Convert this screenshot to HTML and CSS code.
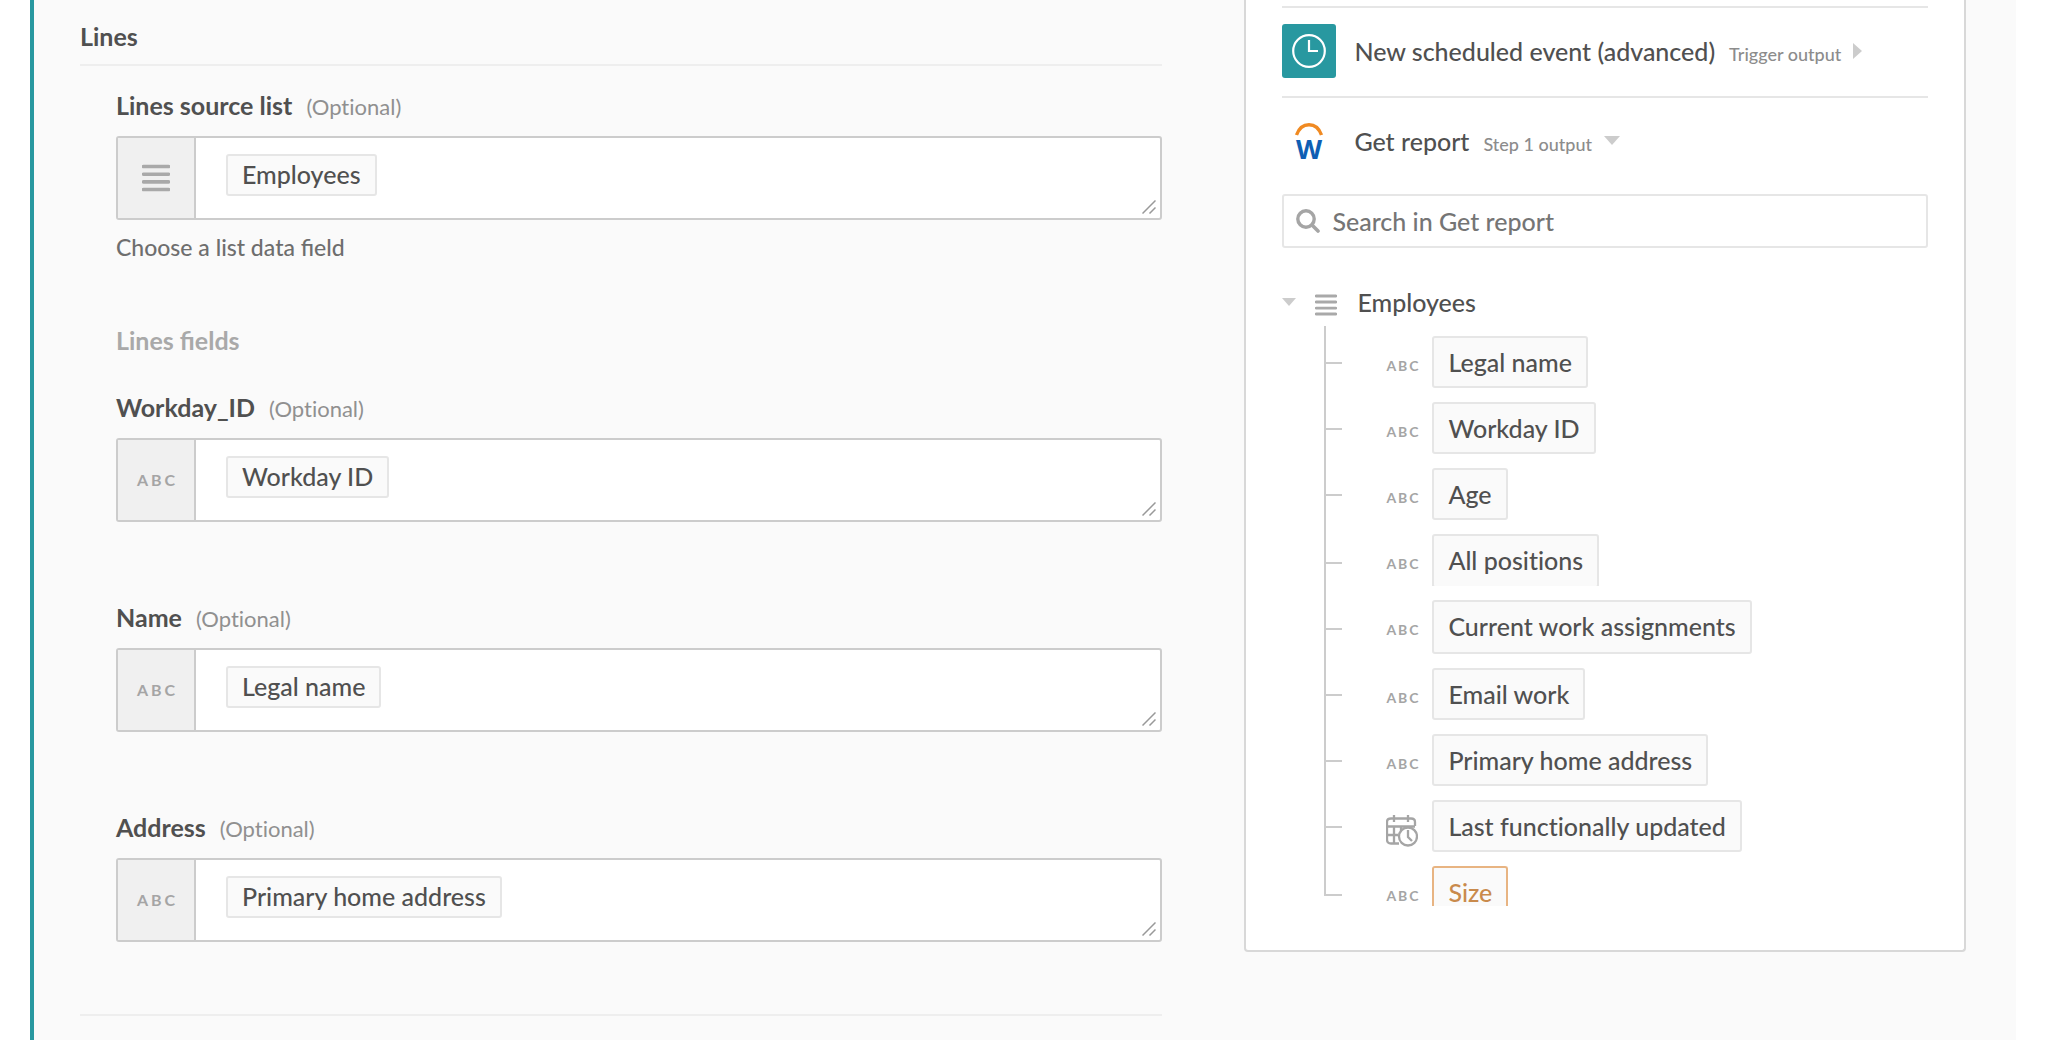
FILE: index.html
```html
<!DOCTYPE html>
<html lang="en">
<head>
<meta charset="utf-8">
<title>Lines mapping</title>
<link rel="stylesheet" href="styles.css">
</head>
<body>
<svg width="0" height="0" class="defs" aria-hidden="true">
  <symbol id="list" viewBox="0 0 28 28">
    <path d="M1.500 2.500h25M1.500 10.200h25M1.500 17.900h25M1.500 25.500h25" stroke="#a9a9a9" stroke-width="3.600" stroke-linecap="round"/>
  </symbol>
  <symbol id="grip" viewBox="0 0 14 14">
    <path d="M.5 13.500l13-13M7.500 13.500l6-6" stroke="#999" stroke-width="1.500" fill="none"/>
  </symbol>
</svg>
<div class="workspace">
  <main class="form">
    <h2 class="section-title">Lines</h2>
    <div class="fields">
      <div class="field">
        <label class="label" for="source">Lines source list <span class="optional">(Optional)</span></label>
        <div class="control">
          <span class="type"><svg class="list-icon"><use href="#list"/></svg></span>
          <div class="value"><span class="tag">Employees</span><textarea id="source"></textarea></div>
          <svg class="grip"><use href="#grip"/></svg>
        </div>
        <p class="hint">Choose a list data field</p>
      </div>
      <h3 class="subheading">Lines fields</h3>
      <div class="field">
        <label class="label" for="workday">Workday_ID <span class="optional">(Optional)</span></label>
        <div class="control">
          <span class="type type-text">ABC</span>
          <div class="value"><span class="tag">Workday ID</span><textarea id="workday"></textarea></div>
          <svg class="grip"><use href="#grip"/></svg>
        </div>
      </div>
      <div class="field">
        <label class="label" for="name">Name <span class="optional">(Optional)</span></label>
        <div class="control">
          <span class="type type-text">ABC</span>
          <div class="value"><span class="tag">Legal name</span><textarea id="name"></textarea></div>
          <svg class="grip"><use href="#grip"/></svg>
        </div>
      </div>
      <div class="field">
        <label class="label" for="address">Address <span class="optional">(Optional)</span></label>
        <div class="control">
          <span class="type type-text">ABC</span>
          <div class="value"><span class="tag">Primary home address</span><textarea id="address"></textarea></div>
          <svg class="grip"><use href="#grip"/></svg>
        </div>
      </div>
    </div>
  </main>
  <aside class="panel">
    <button class="source" type="button" aria-expanded="false">
      <svg class="app-icon" viewBox="0 0 54 54"><rect width="54" height="54" rx="3" fill="#2898a0"/><circle cx="27" cy="27" r="15.800" fill="none" stroke="#fff" stroke-width="2.200"/><path d="M27 16v11h9" fill="none" stroke="#fff" stroke-width="2.200"/></svg>
      <span class="source-name">New scheduled event (advanced)</span>
      <span class="source-step">Trigger output</span>
      <svg class="arrow" viewBox="0 0 16 16"><path d="M0 0l9 8-9 8z" fill="#ccc"/></svg>
    </button>
    <button class="source" type="button" aria-expanded="true">
      <svg class="app-icon" viewBox="0 0 54 54"><path d="M14.500 21C17 14 21.500 10.700 27 10.700S37 14 39.500 21" fill="none" stroke="#f08a22" stroke-width="3.400"/><text class="logo-letter" x="27" y="45" text-anchor="middle">W</text></svg>
      <span class="source-name">Get report</span>
      <span class="source-step">Step 1 output</span>
      <svg class="arrow" viewBox="0 0 16 16"><path d="M0 3h16l-8 9z" fill="#ccc"/></svg>
    </button>
    <div class="search">
      <svg class="search-icon" viewBox="0 0 24 24"><circle cx="10" cy="10" r="8.200" fill="none" stroke="#a5a5a5" stroke-width="3.400"/><path d="M16 16l6 6" stroke="#a5a5a5" stroke-width="3.600" stroke-linecap="round"/></svg>
      <input class="search-input" type="text" placeholder="Search in Get report" aria-label="Search in Get report">
    </div>
    <div class="tree-head">
      <svg class="caret" viewBox="0 0 14 8"><path d="M0 0h14l-7 8z" fill="#ccc"/></svg>
      <svg class="tree-icon"><use href="#list"/></svg>
      <span>Employees</span>
    </div>
    <ul class="tree">
      <li class="node"><span class="kind">ABC</span><button class="pill" type="button">Legal name</button></li>
      <li class="node"><span class="kind">ABC</span><button class="pill" type="button">Workday ID</button></li>
      <li class="node"><span class="kind">ABC</span><button class="pill" type="button">Age</button></li>
      <li class="node low cut"><span class="kind">ABC</span><button class="pill tall" type="button">All positions</button></li>
      <li class="node low"><span class="kind">ABC</span><button class="pill tall" type="button">Current work assignments</button></li>
      <li class="node"><span class="kind">ABC</span><button class="pill" type="button">Email work</button></li>
      <li class="node"><span class="kind">ABC</span><button class="pill" type="button">Primary home address</button></li>
      <li class="node">
        <svg class="date-icon" viewBox="0 0 32 32" fill="none" stroke="#a5a5a5" stroke-width="2.300">
          <path d="M13 28.500H5q-4 0-4-4V7q0-3.500 4-3.500h20q4 0 4 3.500v4M1 11.500h28M8 0v7M22 0v7M1 20h11M8 11.500v17M15 11.500v5"/>
          <circle cx="22" cy="21.500" r="9" fill="#fff"/><path d="M22 15v7l4 4"/>
        </svg>
        <button class="pill" type="button">Last functionally updated</button>
      </li>
      <li class="node low last"><span class="kind">ABC</span><button class="pill active" type="button">Size</button></li>
    </ul>
  </aside>
</div>
</body>
</html>
```
FILE: styles.css
```css
* { box-sizing: border-box; }

body {
  margin: 0;
  padding: 0 30px;
  background: #fff;
  color: #505050;
  font: 500 25px/32px Lato, "Liberation Sans", sans-serif;
  font-variant-ligatures: no-common-ligatures;
}

.defs { position: absolute; }

button, input, textarea {
  color: inherit;
  font: inherit;
  font-variant-ligatures: inherit;
}

.workspace {
  display: grid;
  grid-template-columns: 3fr 2fr;
  align-items: start;
  gap: 82px;
  min-height: 100vh;
  padding: 0 50px 0 46px;
  border-left: 4px solid #2898a0;
  background: #fafafa;
}

.form { border-bottom: 2px solid #eee; }

.section-title {
  margin: 0;
  padding: 20px 0 12px;
  border-bottom: 2px solid #eee;
  font-size: 25px;
  font-weight: 700;
}

.fields { padding: 23px 0 72px 36px; }

.field + .field { margin-top: 79px; }

.label {
  display: flex;
  align-items: baseline;
  gap: 14px;
  height: 32px;
  margin-bottom: 15px;
  font-weight: 700;
}

.optional { color: #909090; font-size: 22px; font-weight: 400; }

.control {
  position: relative;
  display: flex;
  height: 84px;
  border: 2px solid #ccc;
  border-radius: 3px;
  background: #fff;
}

.type {
  display: flex;
  align-items: center;
  justify-content: center;
  width: 78px;
  border-right: 2px solid #ccc;
  background: #f0f0f0;
  color: #a5a5a5;
  font-size: 16px;
  font-weight: 700;
  letter-spacing: 3px;
}

.type-text { padding-left: 3px; }

.list-icon { width: 28px; height: 28px; }

.value {
  flex: 1;
  display: flex;
  align-items: flex-start;
  padding: 16px 30px;
}

.tag {
  padding: 0 14px 2px;
  border: 2px solid #e6e6e6;
  border-radius: 3px;
  background: #fafafa;
  line-height: 36px;
}

textarea {
  flex: 1;
  height: 40px;
  padding: 0 8px;
  border: 0;
  outline: 0;
  background: none;
  resize: none;
}

.grip {
  position: absolute;
  right: 4px;
  bottom: 4px;
  width: 14px;
  height: 14px;
}

.hint { margin: 11px 0 0; color: #6e6e6e; font-size: 23px; }

.subheading {
  margin: 61px 0 35px;
  color: #a9a9a9;
  font-size: 25px;
  font-weight: 700;
}

.hint, .subheading { font-variant-ligatures: normal; }

.panel {
  padding: 6px 36px 44px;
  border: 2px solid #d8d8d8;
  border-top: 0;
  border-radius: 0 0 4px 4px;
  background: #fff;
}

.source {
  display: flex;
  align-items: center;
  width: 100%;
  padding: 16px 0 18px;
  border: 0;
  border-top: 2px solid #e6e6e6;
  background: none;
  text-align: left;
}

.app-icon { width: 54px; height: 54px; margin-right: 18px; }

.logo-letter {
  fill: #0f5fb4;
  font: 700 27px "Open Sans", sans-serif;
}

.source-step { margin: 6px 12px 0 14px; color: #8c8c8c; font-size: 18px; }

.arrow { width: 16px; height: 16px; }

.search {
  display: flex;
  align-items: center;
  gap: 12px;
  height: 54px;
  margin-top: 8px;
  padding: 0 12px;
  border: 2px solid #e6e6e6;
  border-radius: 3px;
}

.search-icon { width: 24px; height: 24px; }

.search-input {
  flex: 1;
  padding: 0;
  border: 0;
  outline: 0;
  background: none;
}

.search-input::placeholder { color: #757575; opacity: 1; }

.tree-head {
  display: flex;
  align-items: center;
  margin: 38px 0 8px;
}

.caret { width: 14px; height: 8px; margin-right: 19px; }

.tree-icon { width: 22px; height: 22px; margin: 6px 20px 0 0; }

.tree { margin: 0 0 0 42px; padding: 0; list-style: none; }

/* The trunk is a background stripe, the twig is the first grid cell. */
.node {
  display: grid;
  grid-template-columns: 62px 46px 1fr;
  align-items: start;
  justify-items: start;
  padding-top: 14px;
  background: linear-gradient(#ccc, #ccc) 0 0 / 2px 100% no-repeat;
}

.node:first-child { padding-top: 10px; }

.node::before {
  content: "";
  width: 18px;
  height: 2px;
  margin-top: 26px;
  background: #ccc;
}

.low::before { margin-top: 28px; }

.cut { height: 66px; overflow: hidden; }

.last { background-size: 2px 44px; height: 54px; }

.kind {
  margin-top: 14px;
  color: #a5a5a5;
  font-size: 14px;
  font-weight: 700;
  letter-spacing: 2px;
}

.date-icon { width: 32px; height: 32px; margin-top: 15px; }

.pill {
  height: 52px;
  padding: 0 14px;
  border: 2px solid #e6e6e6;
  border-radius: 3px;
  background: #fafafa;
  line-height: 48px;
  white-space: nowrap;
}

.tall { height: 54px; padding-bottom: 2px; }

.active {
  height: 40px;
  padding-top: 10px;
  border-color: #e8b482;
  border-bottom: 0;
  border-radius: 3px 3px 0 0;
  color: #c98a4c;
  line-height: 28px;
}
```
